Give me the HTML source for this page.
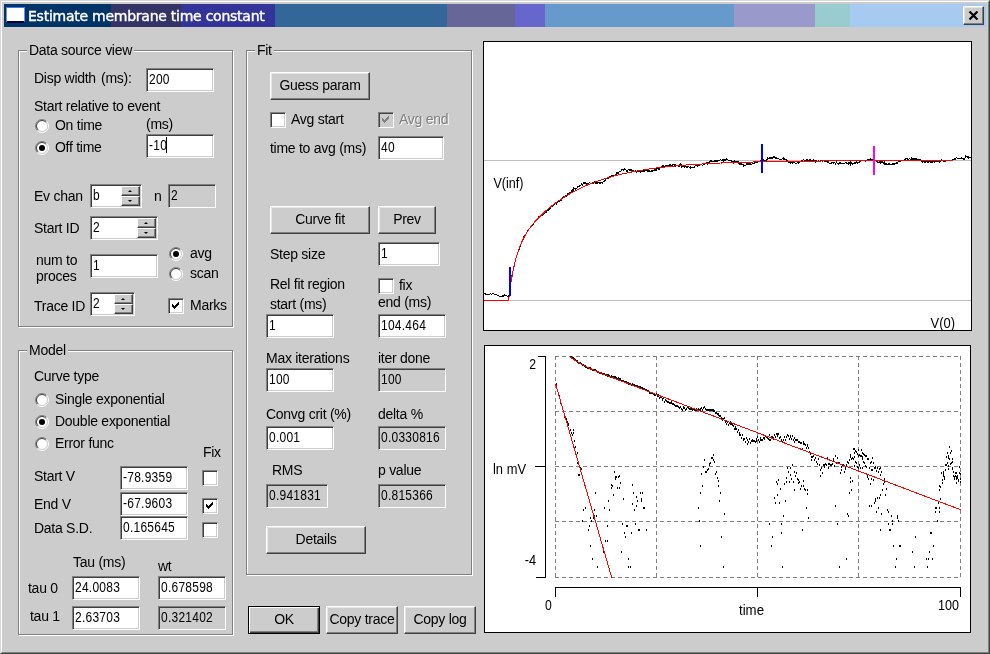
<!DOCTYPE html>
<html><head><meta charset="utf-8"><title>Estimate membrane time constant</title>
<style>
html,body{margin:0;padding:0;background:#ccc;overflow:hidden}
#win{will-change:transform;position:relative;width:990px;height:654px;background:#ccc;overflow:hidden;
 font-family:"Liberation Sans",Arial,sans-serif;font-size:14px;color:#000;
 box-sizing:border-box}
#win:before{content:"";position:absolute;left:0;top:0;right:0;bottom:0;box-sizing:border-box;
 border:1px solid;border-color:#d8d8d8 #404040 #404040 #d8d8d8;z-index:5;pointer-events:none}
#win:after{content:"";position:absolute;left:1px;top:1px;right:1px;bottom:1px;box-sizing:border-box;
 border:1px solid;border-color:#fff #808080 #808080 #fff;z-index:5;pointer-events:none}
.t{position:absolute;white-space:pre;line-height:16px;height:16px;letter-spacing:-0.27px}
.t.gl{background:#ccc}
.t.dis{color:#808080;text-shadow:1px 1px 0 #fff}
.title{position:absolute;font-family:"DejaVu Sans","Liberation Sans",sans-serif;font-size:14px;line-height:18px;color:#fff;white-space:pre;letter-spacing:-0.25px;-webkit-text-stroke:0.4px #fff}
.grp{position:absolute;box-sizing:border-box;border:1px solid #808080;box-shadow:1px 1px 0 #fff, inset 1px 1px 0 #fff}
.ed{position:absolute;box-sizing:border-box;background:#fff;border:1px solid;border-color:#808080 #fff #fff #808080;
 box-shadow:inset 1px 1px 0 #404040, inset -1px -1px 0 #ccc}
.ed.ro{background:#ccc}
.et{position:absolute;left:2px;top:2px;line-height:16px;white-space:pre;letter-spacing:0.3px;transform:scaleX(0.856);transform-origin:0 0}
.car{position:absolute;left:19px;top:2px;width:1px;height:16px;background:#000}
.sp{position:absolute;box-sizing:border-box;background:#ccc;border:1px solid;border-color:#fff #404040 #404040 #fff;
 box-shadow:inset -1px -1px 0 #808080}
.sp b{position:absolute;left:50%;top:50%;width:0;height:0;margin-left:-3px;border-left:2.5px solid transparent;border-right:2.5px solid transparent}
.sp b.up{border-bottom:2.5px solid #000;margin-top:-1px}
.sp b.dn{border-top:2.5px solid #000;margin-top:-1.5px}
.btn{position:absolute;box-sizing:border-box;background:#ccc;border:1px solid;border-color:#fff #404040 #404040 #fff;
 box-shadow:inset -1px -1px 0 #808080, inset 1px 1px 0 #e6e6e6;text-align:center}
.btn span{display:block;line-height:16px;margin-top:4px;letter-spacing:-0.27px;white-space:pre}
.btn.def{border-color:#000;box-shadow:inset 1px 1px 0 #fff, inset -1px -1px 0 #404040, inset -2px -2px 0 #808080}
.btn.def span{margin-top:4px}
.rad{position:absolute}
.chk{position:absolute;width:16px;height:16px;box-sizing:border-box;background:#fff;border:1px solid;border-color:#808080 #fff #fff #808080;
 box-shadow:inset 1px 1px 0 #404040, inset -1px -1px 0 #ccc}
.chk.dis{background:#ccc}
.plot{position:absolute;background:#fff;box-sizing:border-box;border:1px solid #000}
svg text{font-family:"Liberation Sans",Arial,sans-serif}
</style></head>
<body>
<div id="win">
<div style="position:absolute;left:4px;top:4px;width:107px;height:23px;background:#003366"></div>
<div style="position:absolute;left:111px;top:4px;width:70px;height:23px;background:#333366"></div>
<div style="position:absolute;left:181px;top:4px;width:94px;height:23px;background:#333399"></div>
<div style="position:absolute;left:275px;top:4px;width:172px;height:23px;background:#336699"></div>
<div style="position:absolute;left:447px;top:4px;width:68px;height:23px;background:#666699"></div>
<div style="position:absolute;left:515px;top:4px;width:30px;height:23px;background:#6666cc"></div>
<div style="position:absolute;left:545px;top:4px;width:189px;height:23px;background:#6699cc"></div>
<div style="position:absolute;left:734px;top:4px;width:81px;height:23px;background:#9999cc"></div>
<div style="position:absolute;left:815px;top:4px;width:35px;height:23px;background:#99cccc"></div>
<div style="position:absolute;left:850px;top:4px;width:136px;height:23px;background:#a6caf0"></div>
<div style="position:absolute;left:6px;top:7px;width:19px;height:16px;background:#fff;box-sizing:border-box;border-top:1px solid #3a7bf0;border-left:1px solid #6f8fe0;border-right:1px solid #6f8fe0;border-bottom:2px solid #000040"></div>
<div class="title" style="left:28px;top:7px">Estimate membrane time constant</div>
<div class="btn" style="left:963px;top:6px;width:21px;height:19px"><svg width="21" height="19" style="position:absolute;left:-1px;top:-1px"><path d="M6.5 5.5 L14.5 13.5 M14.5 5.5 L6.5 13.5" stroke="#000" stroke-width="2.2" fill="none"/></svg></div>
<div class="grp" style="left:18px;top:50px;width:215px;height:277px"></div>
<div class="t gl" style="left:27px;top:42px;padding:0 2px">Data source view</div>
<div class="t " style="left:34px;top:70px;">Disp width</div>
<div class="t " style="left:101px;top:70px;">(ms):</div>
<div class="ed" style="left:146px;top:68px;width:68px;height:24px"><span class="et">200</span></div>
<div class="t " style="left:34px;top:98px;">Start relative to event</div>
<svg class="rad" style="left:35px;top:119px" width="14" height="14" viewBox="0 0 14 14"><circle cx="7" cy="7" r="5.5" fill="#fff"/><path d="M11.60 2.40A6.5 6.5 0 0 0 2.40 11.60" stroke="#808080" fill="none"/><path d="M10.89 3.11A5.5 5.5 0 0 0 3.11 10.89" stroke="#404040" fill="none"/><path d="M2.40 11.60A6.5 6.5 0 0 0 11.60 2.40" stroke="#fff" fill="none"/><path d="M3.11 10.89A5.5 5.5 0 0 0 10.89 3.11" stroke="#d0d0d0" fill="none"/></svg>
<div class="t " style="left:55px;top:117px;">On time</div>
<div class="t " style="left:146px;top:116px;">(ms)</div>
<svg class="rad" style="left:35px;top:141px" width="14" height="14" viewBox="0 0 14 14"><circle cx="7" cy="7" r="5.5" fill="#fff"/><path d="M11.60 2.40A6.5 6.5 0 0 0 2.40 11.60" stroke="#808080" fill="none"/><path d="M10.89 3.11A5.5 5.5 0 0 0 3.11 10.89" stroke="#404040" fill="none"/><path d="M2.40 11.60A6.5 6.5 0 0 0 11.60 2.40" stroke="#fff" fill="none"/><path d="M3.11 10.89A5.5 5.5 0 0 0 10.89 3.11" stroke="#d0d0d0" fill="none"/><circle cx="7" cy="7" r="3" fill="#000"/></svg>
<div class="t " style="left:55px;top:139px;">Off time</div>
<div class="ed" style="left:146px;top:134px;width:68px;height:24px"><span class="et">-10</span><i class="car"></i></div>
<div class="t " style="left:34px;top:188px;">Ev chan</div>
<div class="ed" style="left:90px;top:184px;width:52px;height:24px"><span class="et">b</span><div class="sp" style="left:30px;top:1px;width:19px;height:10px"><b class="up"></b></div><div class="sp" style="left:30px;top:11px;width:19px;height:10px"><b class="dn"></b></div></div>
<div class="t " style="left:154px;top:188px;">n</div>
<div class="ed ro" style="left:168px;top:184px;width:48px;height:24px"><span class="et">2</span></div>
<div class="t " style="left:34px;top:220px;">Start ID</div>
<div class="ed" style="left:90px;top:216px;width:68px;height:24px"><span class="et">2</span><div class="sp" style="left:46px;top:1px;width:19px;height:10px"><b class="up"></b></div><div class="sp" style="left:46px;top:11px;width:19px;height:10px"><b class="dn"></b></div></div>
<div class="t " style="left:36px;top:252px;">num to</div>
<div class="t " style="left:36px;top:268px;">proces</div>
<div class="ed" style="left:90px;top:254px;width:68px;height:24px"><span class="et">1</span></div>
<svg class="rad" style="left:169px;top:247px" width="14" height="14" viewBox="0 0 14 14"><circle cx="7" cy="7" r="5.5" fill="#fff"/><path d="M11.60 2.40A6.5 6.5 0 0 0 2.40 11.60" stroke="#808080" fill="none"/><path d="M10.89 3.11A5.5 5.5 0 0 0 3.11 10.89" stroke="#404040" fill="none"/><path d="M2.40 11.60A6.5 6.5 0 0 0 11.60 2.40" stroke="#fff" fill="none"/><path d="M3.11 10.89A5.5 5.5 0 0 0 10.89 3.11" stroke="#d0d0d0" fill="none"/><circle cx="7" cy="7" r="3" fill="#000"/></svg>
<div class="t " style="left:190px;top:245px;">avg</div>
<svg class="rad" style="left:169px;top:267px" width="14" height="14" viewBox="0 0 14 14"><circle cx="7" cy="7" r="5.5" fill="#fff"/><path d="M11.60 2.40A6.5 6.5 0 0 0 2.40 11.60" stroke="#808080" fill="none"/><path d="M10.89 3.11A5.5 5.5 0 0 0 3.11 10.89" stroke="#404040" fill="none"/><path d="M2.40 11.60A6.5 6.5 0 0 0 11.60 2.40" stroke="#fff" fill="none"/><path d="M3.11 10.89A5.5 5.5 0 0 0 10.89 3.11" stroke="#d0d0d0" fill="none"/></svg>
<div class="t " style="left:190px;top:265px;">scan</div>
<div class="t " style="left:34px;top:298px;">Trace ID</div>
<div class="ed" style="left:90px;top:292px;width:45px;height:24px"><span class="et">2</span><div class="sp" style="left:23px;top:1px;width:19px;height:10px"><b class="up"></b></div><div class="sp" style="left:23px;top:11px;width:19px;height:10px"><b class="dn"></b></div></div>
<div class="chk" style="left:168px;top:298px"><svg width="12" height="12" viewBox="0 0 12 12" shape-rendering="crispEdges" style="position:absolute;left:1px;top:1px"><path d="M2 4h1v3h-1zM3 5h1v3h-1zM4 6h1v3h-1zM5 5h1v3h-1zM6 4h1v3h-1zM7 3h1v3h-1zM8 2h1v3h-1z" fill="#000"/></svg></div>
<div class="t " style="left:190px;top:297px;">Marks</div>
<div class="grp" style="left:18px;top:350px;width:215px;height:285px"></div>
<div class="t gl" style="left:27px;top:342px;padding:0 2px">Model</div>
<div class="t " style="left:34px;top:368px;">Curve type</div>
<svg class="rad" style="left:35px;top:393px" width="14" height="14" viewBox="0 0 14 14"><circle cx="7" cy="7" r="5.5" fill="#fff"/><path d="M11.60 2.40A6.5 6.5 0 0 0 2.40 11.60" stroke="#808080" fill="none"/><path d="M10.89 3.11A5.5 5.5 0 0 0 3.11 10.89" stroke="#404040" fill="none"/><path d="M2.40 11.60A6.5 6.5 0 0 0 11.60 2.40" stroke="#fff" fill="none"/><path d="M3.11 10.89A5.5 5.5 0 0 0 10.89 3.11" stroke="#d0d0d0" fill="none"/></svg>
<div class="t " style="left:55px;top:391px;">Single exponential</div>
<svg class="rad" style="left:35px;top:415px" width="14" height="14" viewBox="0 0 14 14"><circle cx="7" cy="7" r="5.5" fill="#fff"/><path d="M11.60 2.40A6.5 6.5 0 0 0 2.40 11.60" stroke="#808080" fill="none"/><path d="M10.89 3.11A5.5 5.5 0 0 0 3.11 10.89" stroke="#404040" fill="none"/><path d="M2.40 11.60A6.5 6.5 0 0 0 11.60 2.40" stroke="#fff" fill="none"/><path d="M3.11 10.89A5.5 5.5 0 0 0 10.89 3.11" stroke="#d0d0d0" fill="none"/><circle cx="7" cy="7" r="3" fill="#000"/></svg>
<div class="t " style="left:55px;top:413px;">Double exponential</div>
<svg class="rad" style="left:35px;top:437px" width="14" height="14" viewBox="0 0 14 14"><circle cx="7" cy="7" r="5.5" fill="#fff"/><path d="M11.60 2.40A6.5 6.5 0 0 0 2.40 11.60" stroke="#808080" fill="none"/><path d="M10.89 3.11A5.5 5.5 0 0 0 3.11 10.89" stroke="#404040" fill="none"/><path d="M2.40 11.60A6.5 6.5 0 0 0 11.60 2.40" stroke="#fff" fill="none"/><path d="M3.11 10.89A5.5 5.5 0 0 0 10.89 3.11" stroke="#d0d0d0" fill="none"/></svg>
<div class="t " style="left:55px;top:435px;">Error func</div>
<div class="t " style="left:203px;top:444px;">Fix</div>
<div class="t " style="left:34px;top:468px;">Start V</div>
<div class="ed" style="left:120px;top:466px;width:68px;height:24px"><span class="et">-78.9359</span></div>
<div class="chk" style="left:202px;top:470px"></div>
<div class="t " style="left:34px;top:496px;">End V</div>
<div class="ed" style="left:120px;top:492px;width:68px;height:24px"><span class="et">-67.9603</span></div>
<div class="chk" style="left:202px;top:498px"><svg width="12" height="12" viewBox="0 0 12 12" shape-rendering="crispEdges" style="position:absolute;left:1px;top:1px"><path d="M2 4h1v3h-1zM3 5h1v3h-1zM4 6h1v3h-1zM5 5h1v3h-1zM6 4h1v3h-1zM7 3h1v3h-1zM8 2h1v3h-1z" fill="#000"/></svg></div>
<div class="t " style="left:34px;top:520px;">Data S.D.</div>
<div class="ed" style="left:120px;top:516px;width:68px;height:24px"><span class="et">0.165645</span></div>
<div class="chk" style="left:202px;top:522px"></div>
<div class="t " style="left:73px;top:554px;">Tau (ms)</div>
<div class="t " style="left:158px;top:558px;">wt</div>
<div class="t " style="left:28px;top:580px;">tau 0</div>
<div class="ed" style="left:72px;top:576px;width:68px;height:24px"><span class="et">24.0083</span></div>
<div class="ed" style="left:158px;top:576px;width:68px;height:24px"><span class="et">0.678598</span></div>
<div class="t " style="left:30px;top:608px;">tau 1</div>
<div class="ed" style="left:72px;top:606px;width:68px;height:24px"><span class="et">2.63703</span></div>
<div class="ed ro" style="left:158px;top:606px;width:68px;height:24px"><span class="et">0.321402</span></div>
<div class="grp" style="left:246px;top:50px;width:226px;height:525px"></div>
<div class="t gl" style="left:255px;top:42px;padding:0 2px">Fit</div>
<div class="btn" style="left:270px;top:72px;width:100px;height:28px"><span>Guess param</span></div>
<div class="chk" style="left:270px;top:112px"></div>
<div class="t " style="left:291px;top:111px;">Avg start</div>
<div class="chk dis" style="left:378px;top:112px"><svg width="12" height="12" viewBox="0 0 12 12" shape-rendering="crispEdges" style="position:absolute;left:1px;top:1px"><path d="M2 4h1v3h-1zM3 5h1v3h-1zM4 6h1v3h-1zM5 5h1v3h-1zM6 4h1v3h-1zM7 3h1v3h-1zM8 2h1v3h-1z" fill="#808080"/></svg></div>
<div class="t dis" style="left:399px;top:111px;">Avg end</div>
<div class="t " style="left:270px;top:140px;">time to avg (ms)</div>
<div class="ed" style="left:378px;top:136px;width:66px;height:24px"><span class="et">40</span></div>
<div class="btn" style="left:270px;top:206px;width:100px;height:28px"><span>Curve fit</span></div>
<div class="btn" style="left:378px;top:206px;width:58px;height:28px"><span>Prev</span></div>
<div class="t " style="left:270px;top:246px;">Step size</div>
<div class="ed" style="left:378px;top:242px;width:62px;height:24px"><span class="et">1</span></div>
<div class="t " style="left:270px;top:276px;">Rel fit region</div>
<div class="chk" style="left:378px;top:278px"></div>
<div class="t " style="left:399px;top:277px;">fix</div>
<div class="t " style="left:270px;top:296px;">start (ms)</div>
<div class="t " style="left:378px;top:294px;">end (ms)</div>
<div class="ed" style="left:266px;top:314px;width:68px;height:24px"><span class="et">1</span></div>
<div class="ed" style="left:378px;top:314px;width:68px;height:24px"><span class="et">104.464</span></div>
<div class="t " style="left:266px;top:350px;">Max iterations</div>
<div class="t " style="left:378px;top:350px;">iter done</div>
<div class="ed" style="left:266px;top:368px;width:68px;height:24px"><span class="et">100</span></div>
<div class="ed ro" style="left:378px;top:368px;width:68px;height:24px"><span class="et">100</span></div>
<div class="t " style="left:266px;top:406px;">Convg crit (%)</div>
<div class="t " style="left:378px;top:406px;">delta %</div>
<div class="ed" style="left:266px;top:426px;width:68px;height:24px"><span class="et">0.001</span></div>
<div class="ed ro" style="left:378px;top:426px;width:68px;height:24px"><span class="et">0.0330816</span></div>
<div class="t " style="left:272px;top:462px;">RMS</div>
<div class="t " style="left:378px;top:462px;">p value</div>
<div class="ed ro" style="left:266px;top:484px;width:62px;height:24px"><span class="et">0.941831</span></div>
<div class="ed ro" style="left:378px;top:484px;width:68px;height:24px"><span class="et">0.815366</span></div>
<div class="btn" style="left:266px;top:526px;width:100px;height:28px"><span>Details</span></div>
<div class="btn def" style="left:248px;top:606px;width:72px;height:28px"><span>OK</span></div>
<div class="btn" style="left:326px;top:606px;width:72px;height:28px"><span>Copy trace</span></div>
<div class="btn" style="left:404px;top:606px;width:72px;height:28px"><span>Copy log</span></div>
<div class="plot" style="left:483px;top:41px;width:489px;height:290px"></div>
<svg style="position:absolute;left:484px;top:42px" width="487" height="288" viewBox="484 42 487 288">
<g shape-rendering="crispEdges"><path d="M484 160.5H971M484 300.5H971" stroke="#c0c0c0" stroke-width="1" fill="none"/></g>
<polyline points="484.3,293.0 484.8,293.0 485.3,294.0 485.8,294.0 486.2,294.0 486.7,294.0 487.2,294.0 487.7,294.5 488.2,294.5 488.7,294.5 489.2,294.0 489.6,294.0 490.1,294.0 490.6,293.5 491.1,294.0 491.6,294.0 492.1,294.0 492.6,293.5 493.0,293.5 493.5,293.5 494.0,294.0 494.5,294.5 495.0,294.5 495.5,294.5 496.0,294.5 496.5,294.5 496.9,295.0 497.4,295.0 497.9,295.5 498.4,295.5 498.9,296.0 499.4,296.0 499.9,296.5 500.3,296.5 500.8,296.5 501.3,296.5 501.8,296.5 502.3,296.0 502.8,296.5 503.3,296.0 503.7,295.5 504.2,295.5 504.7,295.0 505.2,295.5 505.7,295.5 506.2,295.5 506.7,295.5 507.1,296.5 507.6,296.5 508.1,296.0 508.6,296.0 509.1,295.5 509.6,293.0 510.1,289.5 510.5,285.5 511.0,282.5 511.5,279.0 512.0,275.5 512.5,274.0 513.0,271.5 513.5,269.0 513.9,266.5 514.4,265.0 514.9,263.0 515.4,260.5 515.9,258.5 516.4,257.0 516.9,256.0 517.3,254.0 517.8,252.5 518.3,252.0 518.8,250.0 519.3,249.0 519.8,248.0 520.3,246.5 520.8,245.0 521.2,242.5 521.7,242.5 522.2,241.0 522.7,240.0 523.2,239.0 523.7,237.5 524.2,235.5 524.6,235.5 525.1,235.0 525.6,234.5 526.1,233.5 526.6,232.5 527.1,231.5 527.6,230.5 528.0,230.5 528.5,230.0 529.0,229.0 529.5,228.5 530.0,228.0 530.5,227.5 531.0,226.0 531.4,226.5 531.9,226.5 532.4,225.5 532.9,224.5 533.4,224.0 533.9,223.0 534.4,222.5 534.8,221.5 535.3,221.5 535.8,220.5 536.3,220.0 536.8,219.0 537.3,218.5 537.8,218.0 538.2,218.0 538.7,217.5 539.2,216.0 539.7,216.5 540.2,216.0 540.7,216.5 541.2,216.0 541.6,215.0 542.1,214.5 542.6,215.0 543.1,214.5 543.6,213.0 544.1,214.0 544.6,213.5 545.1,212.5 545.5,212.5 546.0,212.0 546.5,212.0 547.0,211.0 547.5,209.0 548.0,211.0 548.5,209.5 548.9,208.5 549.4,209.0 549.9,207.5 550.4,208.0 550.9,207.0 551.4,206.0 551.9,206.5 552.3,206.0 552.8,205.5 553.3,205.5 553.8,206.0 554.3,204.5 554.8,204.0 555.3,203.5 555.7,203.5 556.2,204.0 556.7,202.5 557.2,203.0 557.7,202.5 558.2,201.5 558.7,201.5 559.1,201.0 559.6,201.5 560.1,201.0 560.6,200.5 561.1,200.5 561.6,199.0 562.1,199.0 562.5,198.0 563.0,197.0 563.5,197.5 564.0,196.5 564.5,197.0 565.0,197.0 565.5,196.0 565.9,195.5 566.4,196.0 566.9,196.0 567.4,194.0 567.9,193.5 568.4,194.0 568.9,193.0 569.4,193.5 569.8,192.0 570.3,192.0 570.8,192.5 571.3,191.5 571.8,190.5 572.3,191.5 572.8,190.0 573.2,188.0 573.7,189.5 574.2,188.5 574.7,188.5 575.2,188.5 575.7,189.0 576.2,188.0 576.6,188.0 577.1,188.0 577.6,187.5 578.1,186.0 578.6,186.5 579.1,187.0 579.6,185.5 580.0,186.0 580.5,185.0 581.0,185.0 581.5,184.0 582.0,185.0 582.5,185.0 583.0,184.0 583.4,183.0 583.9,183.5 584.4,183.5 584.9,182.5 585.4,183.0 585.9,183.0 586.4,184.0 586.8,184.5 587.3,183.5 587.8,184.0 588.3,183.5 588.8,183.0 589.3,182.5 589.8,183.0 590.2,183.5 590.7,183.5 591.2,183.0 591.7,183.0 592.2,183.0 592.7,182.5 593.2,183.0 593.7,183.5 594.1,181.5 594.6,182.5 595.1,183.0 595.6,183.0 596.1,182.5 596.6,183.5 597.1,183.5 597.5,182.5 598.0,182.5 598.5,182.5 599.0,182.5 599.5,183.5 600.0,183.0 600.5,183.0 600.9,182.5 601.4,182.0 601.9,182.0 602.4,183.0 602.9,182.5 603.4,181.5 603.9,182.0 604.3,181.5 604.8,180.5 605.3,180.5 605.8,180.0 606.3,178.5 606.8,179.0 607.3,177.5 607.7,178.0 608.2,177.5 608.7,178.0 609.2,177.5 609.7,176.5 610.2,177.0 610.7,176.5 611.1,177.0 611.6,176.0 612.1,176.5 612.6,175.5 613.1,175.0 613.6,175.5 614.1,175.0 614.5,175.5 615.0,175.0 615.5,175.0 616.0,174.0 616.5,174.0 617.0,172.5 617.5,173.0 618.0,172.5 618.4,173.5 618.9,172.5 619.4,171.5 619.9,172.0 620.4,171.0 620.9,171.0 621.4,170.0 621.8,169.5 622.3,170.0 622.8,169.5 623.3,170.0 623.8,170.5 624.3,169.5 624.8,168.5 625.2,169.0 625.7,169.0 626.2,170.5 626.7,171.0 627.2,171.0 627.7,170.0 628.2,170.0 628.6,169.5 629.1,170.5 629.6,169.5 630.1,169.5 630.6,170.0 631.1,169.5 631.6,170.5 632.0,171.0 632.5,171.5 633.0,170.5 633.5,170.5 634.0,171.5 634.5,171.0 635.0,171.0 635.4,170.5 635.9,171.5 636.4,172.0 636.9,171.0 637.4,171.0 637.9,170.5 638.4,171.0 638.8,171.5 639.3,171.5 639.8,171.5 640.3,172.0 640.8,171.0 641.3,171.0 641.8,171.0 642.2,170.5 642.7,171.5 643.2,171.5 643.7,171.5 644.2,170.0 644.7,171.0 645.2,170.5 645.7,170.5 646.1,171.0 646.6,170.5 647.1,171.5 647.6,170.5 648.1,170.5 648.6,171.0 649.1,170.5 649.5,171.0 650.0,171.5 650.5,171.5 651.0,171.5 651.5,170.5 652.0,170.5 652.5,171.5 652.9,171.0 653.4,170.5 653.9,170.0 654.4,170.5 654.9,169.5 655.4,170.0 655.9,168.5 656.3,170.0 656.8,168.5 657.3,169.0 657.8,168.5 658.3,169.0 658.8,169.0 659.3,169.5 659.7,168.5 660.2,167.5 660.7,167.5 661.2,167.0 661.7,167.5 662.2,166.0 662.7,166.0 663.1,165.5 663.6,166.0 664.1,166.0 664.6,166.0 665.1,166.0 665.6,165.5 666.1,165.0 666.6,165.5 667.0,165.0 667.5,166.0 668.0,165.0 668.5,166.0 669.0,165.5 669.5,165.5 670.0,164.5 670.4,165.5 670.9,166.0 671.4,165.5 671.9,165.0 672.4,165.0 672.9,164.5 673.4,164.5 673.8,165.0 674.3,165.0 674.8,164.5 675.3,165.0 675.8,166.0 676.3,165.5 676.8,166.0 677.2,165.5 677.7,165.5 678.2,166.0 678.7,166.0 679.2,166.0 679.7,165.0 680.2,164.5 680.6,164.0 681.1,164.5 681.6,166.5 682.1,165.5 682.6,166.0 683.1,165.5 683.6,166.5 684.0,166.5 684.5,167.0 685.0,166.5 685.5,165.5 686.0,166.0 686.5,167.0 687.0,167.0 687.4,167.5 687.9,166.5 688.4,166.5 688.9,166.5 689.4,167.5 689.9,168.0 690.4,167.0 690.9,168.5 691.3,167.5 691.8,167.0 692.3,167.5 692.8,168.0 693.3,167.5 693.8,167.0 694.3,166.5 694.7,167.0 695.2,165.5 695.7,165.5 696.2,164.5 696.7,165.5 697.2,165.5 697.7,166.0 698.1,166.0 698.6,165.0 699.1,166.0 699.6,165.0 700.1,164.0 700.6,164.0 701.1,165.0 701.5,164.5 702.0,165.0 702.5,165.0 703.0,165.0 703.5,164.5 704.0,163.5 704.5,164.0 704.9,163.5 705.4,163.5 705.9,163.0 706.4,163.5 706.9,162.5 707.4,163.5 707.9,162.0 708.3,162.0 708.8,163.0 709.3,162.0 709.8,161.0 710.3,161.0 710.8,160.5 711.3,160.5 711.7,161.5 712.2,161.0 712.7,161.5 713.2,161.0 713.7,161.0 714.2,161.0 714.7,161.0 715.2,160.5 715.6,161.0 716.1,160.5 716.6,161.0 717.1,161.0 717.6,161.0 718.1,160.5 718.6,160.5 719.0,161.0 719.5,160.0 720.0,160.0 720.5,159.5 721.0,160.0 721.5,160.5 722.0,161.0 722.4,159.5 722.9,159.5 723.4,160.0 723.9,161.5 724.4,160.0 724.9,159.5 725.4,159.5 725.8,160.5 726.3,160.0 726.8,159.0 727.3,159.5 727.8,160.0 728.3,160.5 728.8,161.0 729.2,160.0 729.7,160.5 730.2,161.0 730.7,160.5 731.2,160.5 731.7,161.0 732.2,161.5 732.6,161.5 733.1,161.0 733.6,162.5 734.1,161.5 734.6,161.0 735.1,161.5 735.6,161.0 736.0,161.0 736.5,161.0 737.0,161.0 737.5,161.5 738.0,162.5 738.5,162.0 739.0,163.5 739.5,164.0 739.9,163.0 740.4,164.5 740.9,164.0 741.4,163.0 741.9,164.5 742.4,164.5 742.9,164.5 743.3,165.0 743.8,166.5 744.3,165.5 744.8,165.5 745.3,166.0 745.8,165.5 746.3,165.0 746.7,164.0 747.2,163.5 747.7,164.0 748.2,163.5 748.7,164.0 749.2,164.5 749.7,163.0 750.1,163.5 750.6,164.0 751.1,164.0 751.6,164.0 752.1,164.0 752.6,163.5 753.1,164.0 753.5,163.0 754.0,163.0 754.5,163.5 755.0,162.0 755.5,162.0 756.0,163.0 756.5,162.0 756.9,162.5 757.4,162.5 757.9,161.5 758.4,161.5 758.9,161.5 759.4,161.0 759.9,161.0 760.3,160.0 760.8,160.0 761.3,161.5 761.8,160.5 762.3,160.0 762.8,160.5 763.3,160.0 763.8,161.0 764.2,160.5 764.7,161.0 765.2,160.0 765.7,160.0 766.2,160.0 766.7,159.0 767.2,159.0 767.6,158.0 768.1,158.5 768.6,158.5 769.1,157.5 769.6,158.5 770.1,158.0 770.6,157.5 771.0,158.5 771.5,157.5 772.0,157.5 772.5,158.0 773.0,157.5 773.5,157.0 774.0,157.5 774.4,157.0 774.9,158.0 775.4,158.0 775.9,157.5 776.4,158.0 776.9,158.0 777.4,158.5 777.8,159.0 778.3,158.5 778.8,159.0 779.3,159.0 779.8,159.0 780.3,159.5 780.8,159.5 781.2,159.5 781.7,159.5 782.2,159.0 782.7,158.5 783.2,159.0 783.7,158.0 784.2,159.0 784.6,159.0 785.1,159.5 785.6,159.5 786.1,159.5 786.6,160.0 787.1,160.5 787.6,160.5 788.1,161.0 788.5,161.0 789.0,162.5 789.5,162.5 790.0,161.5 790.5,163.0 791.0,163.0 791.5,162.5 791.9,163.0 792.4,163.5 792.9,161.5 793.4,162.0 793.9,163.0 794.4,162.5 794.9,163.0 795.3,163.0 795.8,163.5 796.3,163.5 796.8,163.0 797.3,162.5 797.8,163.0 798.3,162.5 798.7,163.0 799.2,162.5 799.7,162.0 800.2,161.5 800.7,161.0 801.2,161.0 801.7,160.5 802.1,160.0 802.6,160.5 803.1,159.5 803.6,159.5 804.1,160.5 804.6,161.0 805.1,161.0 805.5,160.5 806.0,160.5 806.5,160.0 807.0,159.5 807.5,160.0 808.0,160.5 808.5,160.0 808.9,160.0 809.4,160.0 809.9,159.5 810.4,160.0 810.9,159.5 811.4,160.5 811.9,160.0 812.4,161.0 812.8,160.5 813.3,160.0 813.8,161.0 814.3,160.0 814.8,160.0 815.3,160.5 815.8,162.0 816.2,161.5 816.7,160.5 817.2,161.0 817.7,161.5 818.2,160.5 818.7,160.5 819.2,161.5 819.6,161.5 820.1,161.0 820.6,160.5 821.1,161.0 821.6,160.5 822.1,160.5 822.6,161.5 823.0,160.5 823.5,160.5 824.0,161.0 824.5,161.5 825.0,161.0 825.5,161.0 826.0,161.5 826.4,161.5 826.9,161.5 827.4,162.0 827.9,162.0 828.4,161.5 828.9,163.0 829.4,163.5 829.8,163.0 830.3,163.0 830.8,163.0 831.3,163.0 831.8,162.5 832.3,162.5 832.8,162.0 833.2,163.0 833.7,163.0 834.2,163.0 834.7,162.5 835.2,163.0 835.7,164.0 836.2,163.0 836.7,162.0 837.1,163.0 837.6,163.0 838.1,164.5 838.6,163.5 839.1,163.5 839.6,162.5 840.1,162.5 840.5,163.5 841.0,163.0 841.5,163.0 842.0,163.5 842.5,163.5 843.0,163.0 843.5,163.0 843.9,163.0 844.4,163.5 844.9,163.0 845.4,162.5 845.9,162.5 846.4,163.0 846.9,162.5 847.3,164.0 847.8,163.5 848.3,163.0 848.8,164.0 849.3,162.5 849.8,163.0 850.3,164.5 850.7,162.5 851.2,163.5 851.7,162.5 852.2,163.0 852.7,164.0 853.2,163.5 853.7,164.0 854.1,163.5 854.6,163.5 855.1,162.0 855.6,163.5 856.1,163.0 856.6,162.0 857.1,163.5 857.5,163.0 858.0,162.0 858.5,162.5 859.0,162.5 859.5,161.5 860.0,161.0 860.5,161.5 861.0,161.0 861.4,160.5 861.9,160.5 862.4,160.5 862.9,161.0 863.4,160.0 863.9,160.0 864.4,160.5 864.8,160.5 865.3,161.0 865.8,161.0 866.3,160.5 866.8,161.0 867.3,160.0 867.8,159.5 868.2,160.0 868.7,159.5 869.2,159.0 869.7,159.5 870.2,159.5 870.7,158.5 871.2,159.0 871.6,159.5 872.1,159.5 872.6,159.5 873.1,159.5 873.6,160.5 874.1,160.5 874.6,160.5 875.0,160.5 875.5,160.5 876.0,160.5 876.5,161.0 877.0,161.5 877.5,162.0 878.0,162.0 878.4,162.0 878.9,162.0 879.4,162.0 879.9,161.0 880.4,163.0 880.9,162.5 881.4,162.5 881.8,161.0 882.3,162.0 882.8,162.0 883.3,162.5 883.8,163.5 884.3,162.5 884.8,164.5 885.2,164.0 885.7,164.0 886.2,163.5 886.7,164.0 887.2,164.0 887.7,164.0 888.2,164.5 888.7,163.5 889.1,163.5 889.6,164.0 890.1,164.0 890.6,164.0 891.1,164.0 891.6,164.0 892.1,164.5 892.5,164.0 893.0,163.5 893.5,163.5 894.0,164.5 894.5,163.5 895.0,163.0 895.5,163.0 895.9,163.5 896.4,163.0 896.9,164.0 897.4,163.0 897.9,162.0 898.4,161.5 898.9,162.0 899.3,161.5 899.8,161.0 900.3,161.0 900.8,160.5 901.3,160.5 901.8,161.0 902.3,160.5 902.7,160.0 903.2,160.0 903.7,160.0 904.2,160.5 904.7,159.5 905.2,158.5 905.7,159.5 906.1,159.0 906.6,158.5 907.1,159.5 907.6,159.0 908.1,159.5 908.6,159.5 909.1,158.5 909.6,158.5 910.0,159.0 910.5,159.0 911.0,159.5 911.5,158.5 912.0,159.5 912.5,159.0 913.0,160.0 913.4,158.5 913.9,158.5 914.4,159.0 914.9,159.0 915.4,159.0 915.9,158.5 916.4,158.5 916.8,159.5 917.3,159.0 917.8,159.0 918.3,159.0 918.8,159.5 919.3,159.0 919.8,159.0 920.2,159.5 920.7,159.5 921.2,160.5 921.7,161.0 922.2,161.0 922.7,162.0 923.2,161.5 923.6,161.5 924.1,162.5 924.6,161.0 925.1,162.0 925.6,162.0 926.1,161.5 926.6,161.5 927.0,161.5 927.5,162.0 928.0,162.0 928.5,162.5 929.0,161.5 929.5,161.5 930.0,161.0 930.4,162.0 930.9,162.0 931.4,162.5 931.9,161.0 932.4,162.0 932.9,161.5 933.4,161.5 933.9,161.5 934.3,161.0 934.8,162.0 935.3,161.0 935.8,161.0 936.3,160.5 936.8,161.5 937.3,161.0 937.7,161.0 938.2,161.5 938.7,161.5 939.2,162.0 939.7,162.0 940.2,161.5 940.7,160.5 941.1,161.0 941.6,160.0 942.1,161.0 942.6,160.5 943.1,160.0 943.6,161.0 944.1,160.0 944.5,161.0 945.0,161.5 945.5,160.0 946.0,160.0 946.5,160.5 947.0,160.5 947.5,160.5 947.9,160.0 948.4,160.5 948.9,160.0 949.4,160.0 949.9,160.0 950.4,160.0 950.9,160.0 951.3,160.0 951.8,160.0 952.3,160.5 952.8,159.5 953.3,159.5 953.8,160.0 954.3,158.5 954.7,159.0 955.2,158.5 955.7,159.0 956.2,157.5 956.7,157.5 957.2,158.0 957.7,158.5 958.2,158.5 958.6,158.5 959.1,158.5 959.6,158.5 960.1,158.0 960.6,158.0 961.1,158.5 961.6,158.0 962.0,159.0 962.5,158.0 963.0,158.0 963.5,159.0 964.0,159.0 964.5,159.0 965.0,158.0 965.4,156.0 965.9,157.5 966.4,156.0 966.9,156.0 967.4,157.0 967.9,157.5 968.4,157.0 968.8,158.5 969.3,158.0 969.8,157.5 970.3,158.0" fill="none" stroke="#000" stroke-width="1" shape-rendering="crispEdges"/>
<polyline points="484,300.5 508.6,300.5 508.6,300.5 509.6,292.6 510.5,285.6 511.5,279.4 512.5,273.9 513.5,269.0 514.4,264.6 515.4,260.6 516.4,257.0 517.3,253.8 518.3,250.8 519.3,248.1 520.3,245.6 521.2,243.3 522.2,241.1 523.2,239.1 524.2,237.2 525.1,235.5 526.1,233.8 527.1,232.2 528.0,230.7 529.0,229.3 530.0,227.9 531.0,226.6 531.9,225.4 532.9,224.2 533.9,223.0 534.8,221.8 535.8,220.7 536.8,219.7 537.8,218.6 538.7,217.6 539.7,216.6 540.7,215.6 541.6,214.7 542.6,213.7 543.6,212.8 544.6,212.0 545.5,211.1 546.5,210.2 547.5,209.4 548.5,208.6 549.4,207.8 550.4,207.0 551.4,206.2 552.3,205.4 553.3,204.7 554.3,204.0 555.3,203.2 556.2,202.5 557.2,201.8 558.2,201.1 559.1,200.5 560.1,199.8 561.1,199.2 562.1,198.5 563.0,197.9 564.0,197.3 565.0,196.7 565.9,196.1 566.9,195.5 567.9,194.9 568.9,194.3 569.8,193.8 570.8,193.2 571.8,192.7 572.8,192.1 573.7,191.6 574.7,191.1 575.7,190.6 576.6,190.1 577.6,189.6 578.6,189.1 579.6,188.7 580.5,188.2 581.5,187.7 582.5,187.3 583.4,186.8 584.4,186.4 585.4,186.0 586.4,185.6 587.3,185.1 588.3,184.7 589.3,184.3 590.2,183.9 591.2,183.6 592.2,183.2 593.2,182.8 594.1,182.4 595.1,182.1 596.1,181.7 597.1,181.4 598.0,181.0 599.0,180.7 600.0,180.3 600.9,180.0 601.9,179.7 602.9,179.4 603.9,179.1 604.8,178.8 605.8,178.5 606.8,178.2 607.7,177.9 608.7,177.6 609.7,177.3 610.7,177.0 611.6,176.7 612.6,176.5 613.6,176.2 614.5,176.0 615.5,175.7 616.5,175.4 617.5,175.2 618.4,175.0 619.4,174.7 620.4,174.5 621.4,174.3 622.3,174.0 623.3,173.8 624.3,173.6 625.2,173.4 626.2,173.2 627.2,172.9 628.2,172.7 629.1,172.5 630.1,172.3 631.1,172.1 632.0,171.9 633.0,171.8 634.0,171.6 635.0,171.4 635.9,171.2 636.9,171.0 637.9,170.9 638.8,170.7 639.8,170.5 640.8,170.4 641.8,170.2 642.7,170.0 643.7,169.9 644.7,169.7 645.7,169.6 646.6,169.4 647.6,169.3 648.6,169.1 649.5,169.0 650.5,168.8 651.5,168.7 652.5,168.6 653.4,168.4 654.4,168.3 655.4,168.2 656.3,168.0 657.3,167.9 658.3,167.8 659.3,167.7 660.2,167.6 661.2,167.4 662.2,167.3 663.1,167.2 664.1,167.1 665.1,167.0 666.1,166.9 667.0,166.8 668.0,166.7 669.0,166.6 670.0,166.5 670.9,166.4 671.9,166.3 672.9,166.2 673.8,166.1 674.8,166.0 675.8,165.9 676.8,165.8 677.7,165.7 678.7,165.6 679.7,165.6 680.6,165.5 681.6,165.4 682.6,165.3 683.6,165.2 684.5,165.2 685.5,165.1 686.5,165.0 687.4,164.9 688.4,164.9 689.4,164.8 690.4,164.7 691.3,164.6 692.3,164.6 693.3,164.5 694.3,164.4 695.2,164.4 696.2,164.3 697.2,164.2 698.1,164.2 699.1,164.1 700.1,164.1 701.1,164.0 702.0,164.0 703.0,163.9 704.0,163.8 704.9,163.8 705.9,163.7 706.9,163.7 707.9,163.6 708.8,163.6 709.8,163.5 710.8,163.5 711.7,163.4 712.7,163.4 713.7,163.3 714.7,163.3 715.6,163.2 716.6,163.2 717.6,163.1 718.6,163.1 719.5,163.1 720.5,163.0 721.5,163.0 722.4,162.9 723.4,162.9 724.4,162.9 725.4,162.8 726.3,162.8 727.3,162.7 728.3,162.7 729.2,162.7 730.2,162.6 731.2,162.6 732.2,162.6 733.1,162.5 734.1,162.5 735.1,162.5 736.0,162.4 737.0,162.4 738.0,162.4 739.0,162.3 739.9,162.3 740.9,162.3 741.9,162.2 742.9,162.2 743.8,162.2 744.8,162.2 745.8,162.1 746.7,162.1 747.7,162.1 748.7,162.1 749.7,162.0 750.6,162.0 751.6,162.0 752.6,162.0 753.5,161.9 754.5,161.9 755.5,161.9 756.5,161.9 757.4,161.8 758.4,161.8 759.4,161.8 760.3,161.8 761.3,161.7 762.3,161.7 763.3,161.7 764.2,161.7 765.2,161.7 766.2,161.6 767.2,161.6 768.1,161.6 769.1,161.6 770.1,161.6 771.0,161.6 772.0,161.5 773.0,161.5 774.0,161.5 774.9,161.5 775.9,161.5 776.9,161.5 777.8,161.4 778.8,161.4 779.8,161.4 780.8,161.4 781.7,161.4 782.7,161.4 783.7,161.4 784.6,161.3 785.6,161.3 786.6,161.3 787.6,161.3 788.5,161.3 789.5,161.3 790.5,161.3 791.5,161.2 792.4,161.2 793.4,161.2 794.4,161.2 795.3,161.2 796.3,161.2 797.3,161.2 798.3,161.2 799.2,161.2 800.2,161.1 801.2,161.1 802.1,161.1 803.1,161.1 804.1,161.1 805.1,161.1 806.0,161.1 807.0,161.1 808.0,161.1 808.9,161.1 809.9,161.0 810.9,161.0 811.9,161.0 812.8,161.0 813.8,161.0 814.8,161.0 815.8,161.0 816.7,161.0 817.7,161.0 818.7,161.0 819.6,161.0 820.6,161.0 821.6,160.9 822.6,160.9 823.5,160.9 824.5,160.9 825.5,160.9 826.4,160.9 827.4,160.9 828.4,160.9 829.4,160.9 830.3,160.9 831.3,160.9 832.3,160.9 833.2,160.9 834.2,160.9 835.2,160.9 836.2,160.8 837.1,160.8 838.1,160.8 839.1,160.8 840.1,160.8 841.0,160.8 842.0,160.8 843.0,160.8 843.9,160.8 844.9,160.8 845.9,160.8 846.9,160.8 847.8,160.8 848.8,160.8 849.8,160.8 850.7,160.8 851.7,160.8 852.7,160.8 853.7,160.8 854.6,160.8 855.6,160.7 856.6,160.7 857.5,160.7 858.5,160.7 859.5,160.7 860.5,160.7 861.4,160.7 862.4,160.7 863.4,160.7 864.4,160.7 865.3,160.7 866.3,160.7 867.3,160.7 868.2,160.7 869.2,160.7 870.2,160.7 871.2,160.7 872.1,160.7 873.1,160.7 874.1,160.7 875.0,160.7 876.0,160.7 877.0,160.7 878.0,160.7 878.9,160.7 879.9,160.7 880.9,160.7 881.8,160.7 882.8,160.7 883.8,160.7 884.8,160.7 885.7,160.6 886.7,160.6 887.7,160.6 888.7,160.6 889.6,160.6 890.6,160.6 891.6,160.6 892.5,160.6 893.5,160.6 894.5,160.6 895.5,160.6 896.4,160.6 897.4,160.6 898.4,160.6 899.3,160.6 900.3,160.6 901.3,160.6 902.3,160.6 903.2,160.6 904.2,160.6 905.2,160.6 906.1,160.6 907.1,160.6 908.1,160.6 909.1,160.6 910.0,160.6 911.0,160.6 912.0,160.6 913.0,160.6 913.9,160.6 914.9,160.6 915.9,160.6 916.8,160.6 917.8,160.6 918.8,160.6 919.8,160.6 920.7,160.6 921.7,160.6 922.7,160.6 923.6,160.6 924.6,160.6 925.6,160.6 926.6,160.6 927.5,160.6 928.5,160.6 929.5,160.6 930.4,160.6 931.4,160.6 932.4,160.6 933.4,160.6 934.3,160.6 935.3,160.6 936.3,160.6 937.3,160.6 938.2,160.6 939.2,160.6 940.2,160.6 941.1,160.6 942.1,160.6 943.1,160.6 944.1,160.6 945.0,160.6 946.0,160.6 947.0,160.6 947.9,160.6 948.9,160.6 949.9,160.5 950.9,160.5 951.8,160.5 952.8,160.5" fill="none" stroke="#ff0000" stroke-width="1" shape-rendering="crispEdges"/>
<g shape-rendering="crispEdges"><path d="M510 267V296M762 144V173" stroke="#0000ff" stroke-width="2"/><path d="M874 146V175" stroke="#ff00ff" stroke-width="2"/></g>
<text x="493.5" y="188" font-size="14" textLength="30" lengthAdjust="spacingAndGlyphs">V(inf)</text>
<text x="930.5" y="327.5" font-size="14" textLength="24.5" lengthAdjust="spacingAndGlyphs">V(0)</text>
</svg>
<div class="plot" style="left:484px;top:345px;width:487px;height:288px"></div>
<svg style="position:absolute;left:485px;top:346px" width="485" height="286" viewBox="485 346 485 286">
<g shape-rendering="crispEdges"><path d="M555.5 356V578M656.5 356V578M757.5 356V578M858.5 356V578M960.5 356V578M555 356.5H961M555 411.5H961M555 466.5H961M555 521.5H961M555 577.5H961" stroke="#808080" stroke-width="1" stroke-dasharray="4 3" fill="none"/>
<path d="M538 356.5H545.5V577.5H536M535 466.5H545M555.5 597V587.5H960.5V597M757.5 588V597" stroke="#000" stroke-width="1" fill="none"/></g>
<g shape-rendering="crispEdges"><path d="M570.5 356v2M571.5 356v2M572.5 357v2M573.5 357v2M573.5 357v2M574.5 358v2M575.5 359v2M576.5 360v2M577.5 360v2M577.5 361v2M578.5 362v2M579.5 362v2M580.5 362v2M581.5 363v2M581.5 363v2M582.5 364v2M583.5 364v2M584.5 365v2M585.5 365v2M585.5 366v2M586.5 366v2M587.5 367v2M588.5 367v2M589.5 367v2M590.5 367v2M590.5 368v2M591.5 368v2M592.5 369v2M593.5 369v2M594.5 369v2M594.5 369v2M595.5 369v2M596.5 370v2M597.5 371v2M598.5 371v2M598.5 371v2M599.5 372v2M600.5 372v2M601.5 372v2M602.5 373v2M602.5 373v2M603.5 373v2M604.5 373v2M605.5 374v2M606.5 374v2M607.5 374v2M607.5 375v2M608.5 374v2M609.5 375v2M610.5 376v2M611.5 375v2M611.5 375v2M612.5 376v2M613.5 376v2M614.5 376v2M615.5 376v2M615.5 377v2M616.5 377v2M617.5 378v2M618.5 377v2M619.5 378v2M619.5 378v2M620.5 378v2M621.5 380v2M622.5 380v2M623.5 380v2M624.5 381v2M624.5 381v2M625.5 381v2M626.5 381v2M627.5 382v2M628.5 382v2M628.5 383v2M629.5 383v2M630.5 383v2M631.5 384v2M632.5 383v2M632.5 384v2M633.5 384v2M634.5 384v2M635.5 385v2M636.5 385v2M636.5 385v2M637.5 385v2M638.5 386v2M639.5 386v2M640.5 386v2M641.5 387v2M641.5 387v2M642.5 387v2M643.5 388v2M644.5 388v2M645.5 389v2M645.5 389v2M646.5 389v2M647.5 390v2M648.5 390v2M649.5 391v2M649.5 392v2M650.5 392v2M651.5 392v2M652.5 392v2M653.5 393v2M654.5 393v2M654.5 394v2M655.5 394v2M656.5 393v2M657.5 395v2M658.5 394v2M658.5 395v2M659.5 397v2M660.5 396v2M661.5 396v2M662.5 399v2M662.5 398v2M663.5 397v2M664.5 401v2M665.5 399v2M666.5 400v2M666.5 400v2M667.5 401v2M668.5 401v2M669.5 402v2M670.5 402v2M671.5 402v2M671.5 401v2M672.5 403v2M673.5 403v2M674.5 404v2M675.5 405v2M675.5 405v2M676.5 405v2M677.5 405v2M678.5 406v2M679.5 407v2M679.5 407v2M680.5 406v2M681.5 408v2M682.5 409v2M683.5 406v2M683.5 407v2M684.5 407v2M685.5 409v2M686.5 408v2M687.5 406v2M688.5 407v2M688.5 407v2M689.5 408v2M690.5 408v2M691.5 408v2M692.5 409v2M692.5 409v2M693.5 408v2M694.5 409v2M695.5 409v2M696.5 408v2M696.5 409v2M697.5 409v2M698.5 408v2M699.5 409v2M700.5 410v2M700.5 408v2M701.5 407v2M702.5 409v2M703.5 407v2M704.5 406v2M705.5 408v2M705.5 408v2M706.5 409v2M707.5 409v2M708.5 409v2M709.5 409v2M709.5 409v2M710.5 409v2M711.5 409v2M712.5 409v2M713.5 410v2M713.5 409v2M714.5 410v2M715.5 412v2M716.5 412v2M717.5 413v2M718.5 413v2M718.5 414v2M719.5 415v2M720.5 415v2M721.5 417v2M722.5 418v2M722.5 419v2M723.5 418v2M724.5 417v2M725.5 421v2M726.5 420v2M726.5 423v2M727.5 421v2M728.5 424v2M729.5 422v2M730.5 421v2M730.5 423v2M731.5 423v2M732.5 424v2M733.5 425v2M734.5 428v2M735.5 426v2M735.5 428v2M736.5 428v2M737.5 431v2M738.5 429v2M739.5 434v2M739.5 432v2M740.5 434v2M741.5 437v2M742.5 434v2M743.5 438v2M743.5 439v2M744.5 438v2M745.5 441v2M746.5 437v2M747.5 439v2M747.5 443v2M748.5 441v2M749.5 438v2M750.5 442v2M751.5 440v2M752.5 440v2M752.5 439v2M753.5 440v2M754.5 440v2M755.5 441v2M756.5 438v2M756.5 440v2M757.5 436v2M758.5 439v2M759.5 441v2M760.5 437v2M760.5 439v2M761.5 439v2M762.5 439v2M763.5 437v2M764.5 438v2M764.5 437v2M765.5 435v2M766.5 436v2M767.5 437v2M768.5 438v2M769.5 439v2M769.5 434v2M770.5 439v2M771.5 436v2M772.5 436v2M773.5 437v2M773.5 438v2M774.5 434v2M775.5 436v2M776.5 433v2M777.5 433v2M777.5 435v2M778.5 433v2M779.5 437v2M780.5 436v2M781.5 440v2M781.5 439v2M782.5 441v2M783.5 439v2M784.5 436v2M785.5 439v2M786.5 436v2M786.5 436v2M787.5 434v2M788.5 435v2M789.5 438v2M790.5 436v2M790.5 435v2M791.5 438v2M792.5 435v2M793.5 439v2M794.5 441v2M794.5 437v2M795.5 439v2M796.5 439v2M797.5 439v2M798.5 441v2M798.5 441v2M799.5 441v2M800.5 442v2M801.5 442v2M802.5 448v2M803.5 441v2M803.5 443v2M804.5 443v2M805.5 444v2M806.5 447v2M807.5 445v2M807.5 444v2M808.5 447v2M809.5 451v2M810.5 453v2M811.5 459v2M811.5 456v2M812.5 456v2M813.5 455v2M814.5 459v2M815.5 457v2M816.5 461v2M816.5 461v2M817.5 463v2M818.5 458v2M819.5 464v2M820.5 469v2M820.5 475v2M821.5 467v2M822.5 472v2M823.5 464v2M824.5 466v2M824.5 464v2M825.5 463v2M826.5 464v2M827.5 457v2M828.5 463v2M828.5 467v2M829.5 463v2M830.5 464v2M831.5 464v2M832.5 463v2M833.5 458v2M833.5 460v2M834.5 465v2M835.5 455v2M836.5 462v2M837.5 462v2M837.5 457v2M838.5 462v2M839.5 462v2M840.5 472v2M841.5 469v2M841.5 466v2M842.5 464v2M843.5 464v2M844.5 471v2M845.5 466v2M845.5 468v2M846.5 464v2M847.5 461v2M848.5 462v2M849.5 459v2M850.5 456v2M850.5 454v2M851.5 458v2M852.5 457v2M853.5 448v2M854.5 452v2M854.5 448v2M855.5 450v2M856.5 451v2M857.5 453v2M858.5 455v2M858.5 449v2M859.5 454v2M860.5 455v2M861.5 449v2M862.5 452v2M862.5 456v2M863.5 453v2M864.5 454v2M865.5 455v2M866.5 455v2M867.5 458v2M867.5 458v2M868.5 458v2M869.5 467v2M870.5 462v2M871.5 461v2M871.5 469v2M872.5 457v2M873.5 462v2M874.5 467v2M875.5 466v2M875.5 467v2M876.5 470v2M877.5 467v2M878.5 471v2M879.5 468v2M880.5 467v2M880.5 474v2M881.5 471v2M882.5 489v2M883.5 483v2M884.5 481v2M884.5 478v2M885.5 494v2M886.5 488v2M887.5 509v2M888.5 523v2M888.5 511v2M889.5 529v2M890.5 529v2M891.5 515v2M892.5 520v2M892.5 523v2M893.5 545v2M895.5 566v2M896.5 558v2M897.5 515v2M897.5 517v2M898.5 520v2M899.5 545v2M900.5 545v2M912.5 551v2M914.5 566v2M915.5 536v2M926.5 558v2M927.5 566v2M928.5 558v2M929.5 551v2M930.5 532v2M931.5 532v2M932.5 558v2M933.5 545v2M935.5 511v2M935.5 507v2M936.5 507v2M937.5 520v2M938.5 502v2M939.5 485v2M939.5 489v2M940.5 486v2M941.5 472v2M942.5 479v2M943.5 475v2M943.5 472v2M944.5 478v2M945.5 469v2M946.5 464v2M947.5 462v2M948.5 468v2M948.5 465v2M949.5 458v2M950.5 463v2M951.5 462v2M952.5 467v2M952.5 468v2M953.5 475v2M954.5 478v2M955.5 475v2M956.5 476v2M956.5 482v2M957.5 477v2M958.5 480v2M959.5 472v2M960.5 478v2M960.5 481v2M556.5 383v2M556.5 385v2M557.5 390v2M558.5 393v2M559.5 395v2M560.5 399v2M560.5 402v2M561.5 404v2M562.5 407v2M563.5 410v2M564.5 413v2M564.5 416v2M565.5 417v2M566.5 418v2M567.5 421v2M568.5 423v2M568.5 424v2M569.5 431v2M570.5 429v2M571.5 432v2M572.5 434v2M573.5 429v2M573.5 432v2M574.5 440v2M575.5 446v2M576.5 454v2M577.5 452v2M577.5 462v2M578.5 474v2M579.5 474v2M580.5 467v2M581.5 468v2M581.5 473v2M582.5 520v2M583.5 509v2M585.5 507v2M588.5 529v2M589.5 525v2M590.5 545v2M590.5 517v2M591.5 520v2M592.5 558v2M593.5 517v2M594.5 515v2M594.5 509v2M595.5 492v2M596.5 515v2M597.5 566v2M603.5 551v2M604.5 507v2M605.5 540v2M607.5 525v2M607.5 540v2M608.5 500v2M609.5 509v2M611.5 487v2M611.5 484v2M612.5 485v2M613.5 494v2M614.5 471v2M615.5 478v2M615.5 476v2M616.5 476v2M617.5 487v2M618.5 476v2M619.5 475v2M619.5 487v2M620.5 482v2M621.5 551v2M622.5 523v2M623.5 498v2M624.5 532v2M625.5 536v2M626.5 525v2M627.5 525v2M628.5 558v2M628.5 566v2M630.5 566v2M631.5 532v2M632.5 484v2M632.5 503v2M633.5 492v2M634.5 509v2M635.5 523v2M636.5 496v2M636.5 505v2M637.5 500v2M638.5 529v2M639.5 529v2M640.5 492v2M641.5 500v2M641.5 498v2M642.5 492v2M643.5 507v2M644.5 507v2M646.5 529v2M698.5 507v2M699.5 520v2M700.5 545v2M700.5 492v2M701.5 473v2M702.5 485v2M703.5 466v2M704.5 459v2M705.5 471v2M705.5 471v2M706.5 471v2M707.5 469v2M708.5 468v2M709.5 463v2M709.5 464v2M710.5 462v2M711.5 457v2M712.5 457v2M713.5 459v2M713.5 454v2M714.5 461v2M715.5 473v2M716.5 471v2M717.5 477v2M718.5 480v2M718.5 485v2M719.5 500v2M720.5 492v2M721.5 536v2M723.5 566v2M724.5 513v2M769.5 523v2M771.5 545v2M772.5 536v2M774.5 497v2M775.5 502v2M776.5 481v2M777.5 483v2M777.5 494v2M778.5 479v2M779.5 502v2M780.5 488v2M781.5 532v2M781.5 523v2M782.5 566v2M783.5 515v2M784.5 483v2M785.5 500v2M786.5 481v2M786.5 477v2M787.5 467v2M788.5 471v2M789.5 481v2M790.5 474v2M790.5 467v2M791.5 478v2M792.5 464v2M793.5 481v2M794.5 489v2M794.5 471v2M795.5 475v2M796.5 472v2M797.5 478v2M798.5 482v2M798.5 479v2M799.5 481v2M800.5 488v2M801.5 485v2M802.5 529v2M803.5 480v2M803.5 485v2M804.5 488v2M805.5 489v2M806.5 507v2M807.5 493v2M807.5 489v2M808.5 517v2M835.5 505v2M837.5 523v2M839.5 566v2M846.5 558v2M847.5 513v2M848.5 515v2M849.5 492v2M850.5 481v2M850.5 477v2M851.5 489v2M852.5 480v2M853.5 458v2M854.5 465v2M854.5 456v2M855.5 461v2M856.5 462v2M857.5 466v2M858.5 467v2M858.5 455v2M859.5 464v2M860.5 467v2M861.5 455v2M862.5 458v2M862.5 467v2M863.5 461v2M864.5 462v2M865.5 465v2M866.5 466v2M867.5 476v2M867.5 474v2M868.5 478v2M869.5 505v2M870.5 483v2M871.5 478v2M871.5 505v2M872.5 469v2M873.5 479v2M874.5 502v2M875.5 498v2M875.5 500v2M876.5 511v2M877.5 497v2M878.5 507v2M879.5 497v2M880.5 494v2M880.5 529v2M881.5 513v2M939.5 507v2M939.5 511v2M940.5 498v2M941.5 472v2M942.5 482v2M943.5 474v2M943.5 471v2M944.5 476v2M945.5 464v2M946.5 456v2M947.5 452v2M948.5 457v2M948.5 455v2M949.5 446v2M950.5 452v2M951.5 450v2M952.5 458v2M952.5 461v2M953.5 471v2M954.5 476v2M955.5 472v2M956.5 472v2M956.5 478v2M957.5 475v2M958.5 479v2M959.5 466v2M960.5 473v2M960.5 478v2" stroke="#000" stroke-width="1" fill="none"/></g>
<polyline points="569.7,356.6 571.7,358.1 573.7,359.5 575.8,360.8 577.8,362.0 579.8,363.2 581.8,364.3 583.9,365.3 585.9,366.4 587.9,367.3 589.9,368.3 592.0,369.2 594.0,370.1 596.0,371.0 598.0,371.8 600.0,372.7 602.1,373.5 604.1,374.3 606.1,375.1 608.1,375.9 610.2,376.7 612.2,377.5 614.2,378.3 616.2,379.1 618.3,379.9 620.3,380.7 622.3,381.5 624.4,382.2 626.4,383.0 628.4,383.8 630.4,384.6 632.5,385.3 634.5,386.1 636.5,386.9 638.5,387.6 640.5,388.4 642.6,389.2 644.6,389.9 646.6,390.7 648.6,391.5 650.7,392.3 652.7,393.0 654.7,393.8 656.8,394.6 658.8,395.3 660.8,396.1 662.8,396.9 664.9,397.6 666.9,398.4 668.9,399.2 670.9,399.9 673.0,400.7 675.0,401.5 677.0,402.2 679.0,403.0 681.0,403.8 683.1,404.5 685.1,405.3 687.1,406.1 689.1,406.8 691.2,407.6 693.2,408.4 695.2,409.1 697.2,409.9 699.3,410.7 701.3,411.4 703.3,412.2 705.4,413.0 707.4,413.7 709.4,414.5 711.4,415.3 713.5,416.0 715.5,416.8 717.5,417.6 719.5,418.3 721.5,419.1 723.6,419.9 725.6,420.6 727.6,421.4 729.6,422.2 731.7,422.9 733.7,423.7 735.7,424.5 737.8,425.2 739.8,426.0 741.8,426.8 743.8,427.5 745.9,428.3 747.9,429.1 749.9,429.8 751.9,430.6 754.0,431.4 756.0,432.1 758.0,432.9 760.0,433.7 762.0,434.5 764.1,435.2 766.1,436.0 768.1,436.8 770.1,437.5 772.2,438.3 774.2,439.1 776.2,439.8 778.2,440.6 780.3,441.4 782.3,442.1 784.3,442.9 786.4,443.7 788.4,444.4 790.4,445.2 792.4,446.0 794.5,446.7 796.5,447.5 798.5,448.3 800.5,449.0 802.5,449.8 804.6,450.6 806.6,451.3 808.6,452.1 810.6,452.9 812.7,453.6 814.7,454.4 816.7,455.2 818.8,455.9 820.8,456.7 822.8,457.5 824.8,458.2 826.8,459.0 828.9,459.8 830.9,460.5 832.9,461.3 835.0,462.1 837.0,462.8 839.0,463.6 841.0,464.4 843.0,465.1 845.1,465.9 847.1,466.7 849.1,467.4 851.1,468.2 853.2,469.0 855.2,469.7 857.2,470.5 859.2,471.3 861.3,472.0 863.3,472.8 865.3,473.6 867.3,474.3 869.4,475.1 871.4,475.9 873.4,476.6 875.5,477.4 877.5,478.2 879.5,478.9 881.5,479.7 883.5,480.5 885.6,481.2 887.6,482.0 889.6,482.8 891.6,483.5 893.7,484.3 895.7,485.1 897.7,485.8 899.8,486.6 901.8,487.4 903.8,488.1 905.8,488.9 907.8,489.7 909.9,490.4 911.9,491.2 913.9,492.0 916.0,492.8 918.0,493.5 920.0,494.3 922.0,495.1 924.0,495.8 926.1,496.6 928.1,497.4 930.1,498.1 932.1,498.9 934.2,499.7 936.2,500.4 938.2,501.2 940.2,502.0 942.3,502.7 944.3,503.5 946.3,504.3 948.3,505.0 950.4,505.8 952.4,506.6 954.4,507.3 956.5,508.1 958.5,508.9 960.5,509.6" fill="none" stroke="#ff0000" stroke-width="1" shape-rendering="crispEdges"/>
<path d="M555.5 383.7L611.7 577.5" stroke="#ff0000" stroke-width="1" fill="none" shape-rendering="crispEdges"/>
<text x="529.3" y="369" font-size="14" textLength="6.8" lengthAdjust="spacingAndGlyphs">2</text>
<text x="524.8" y="565" font-size="14" textLength="11.4" lengthAdjust="spacingAndGlyphs">-4</text>
<text x="493" y="474" font-size="14" textLength="33" lengthAdjust="spacingAndGlyphs">ln mV</text>
<text x="545" y="610" font-size="14" textLength="6.8" lengthAdjust="spacingAndGlyphs">0</text>
<text x="739" y="615" font-size="14" textLength="25" lengthAdjust="spacingAndGlyphs">time</text>
<text x="938" y="610" font-size="14" textLength="21" lengthAdjust="spacingAndGlyphs">100</text>
</svg>
</div>
</body></html>
